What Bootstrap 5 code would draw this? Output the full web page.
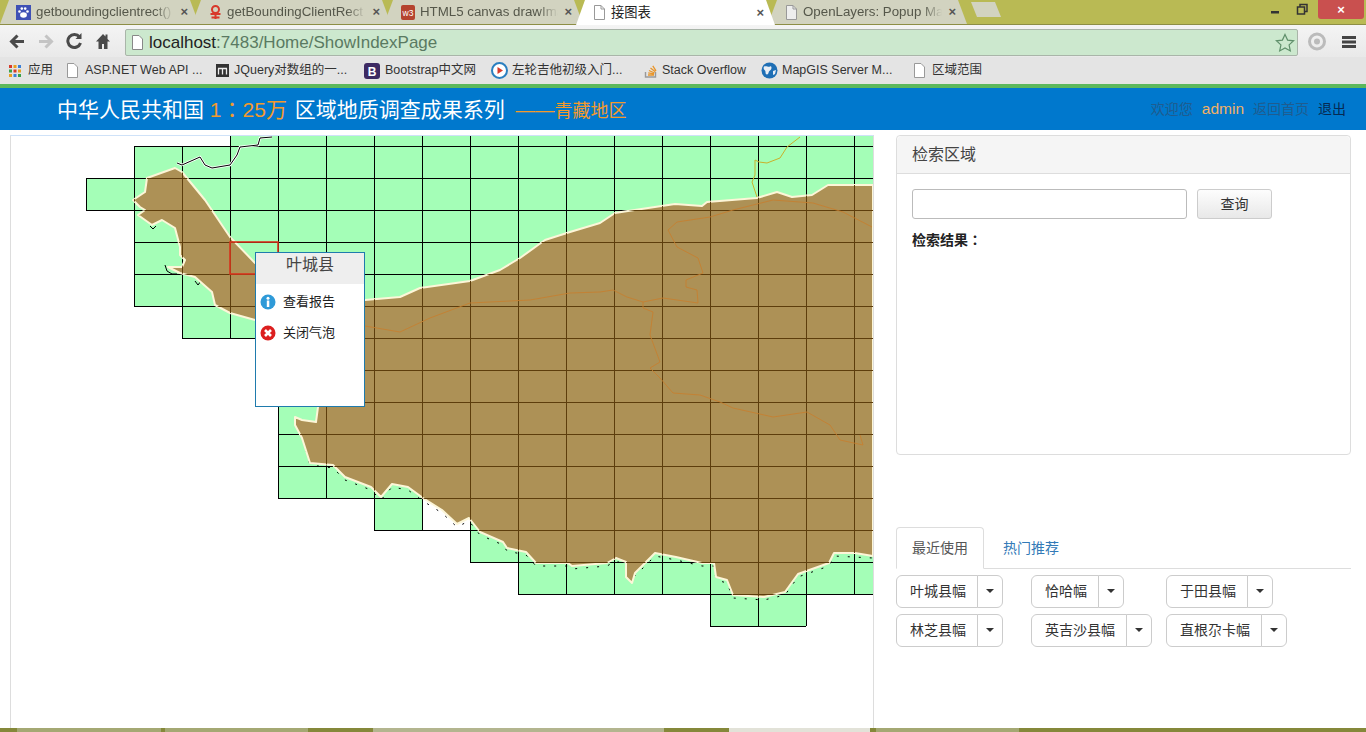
<!DOCTYPE html>
<html lang="zh-CN">
<head>
<meta charset="utf-8">
<title>接图表</title>
<link href="https://cdn.jsdelivr.net/npm/bootstrap@5.3.0/dist/css/bootstrap.min.css" rel="stylesheet">
<style>
html,body{height:732px;overflow:hidden;background:#fff}
body{font-family:"Liberation Sans","Noto Sans CJK SC",sans-serif;font-size:14px;color:#333}
.tabstrip{height:25px;background:#b9ba54;border-bottom:1px solid #8d8e45}
.btab{height:24px;width:199px;margin-right:-7px;padding:0 11px 0 17px;background:#d2d3c0;color:#55574a;font-size:13.3px;clip-path:polygon(0 100%,9px 0,calc(100% - 9px) 0,100% 100%);white-space:nowrap;overflow:hidden;flex:none}
.btab.first{padding-left:16px}
.btab.live{background:#fff;color:#222;height:25px;position:relative;z-index:1}
.btab .ttl{flex:1;min-width:0;margin-left:5px;-webkit-mask-image:linear-gradient(90deg,#000 86%,transparent 100%);mask-image:linear-gradient(90deg,#000 86%,transparent 100%)}
.btab.live .ttl{-webkit-mask-image:none;mask-image:none}
.btab .xx{font-size:13px;color:#555;margin-left:6px;font-weight:700}
.newtab{width:30px;height:15px;margin:2px 0 0 11px;background:#d2d3c0;clip-path:polygon(0 0,calc(100% - 6px) 0,100% 100%,6px 100%);flex:none}
.winctl{width:130px;height:24px;margin-left:auto;margin-right:2px;flex:none}
.winx{width:46px;height:19px;background:#c9504f;color:#fff;font-size:13px;font-weight:700;border-radius:0 0 3px 3px}
.toolbar{height:32px;background:linear-gradient(#f4f4f4,#e9e9e9);padding:4px 0 0 8px}
.tgap{margin-left:11px}
.omni{width:1173px;height:27px;margin-left:14px;background:#cce8ce;border:1px solid #a9b5a9;border-radius:2px;font-size:17px;color:#5a7a62;padding:0 2px 0 5px;line-height:1;flex:none}
.omni b{font-weight:400;color:#222}
.omnidoc{margin-right:5px;flex:none}
.tcircle{margin-left:8px}
.tmenu{margin-left:13px}
.bookbar{height:27px;background:#e4e4e4;font-size:12.5px;color:#333;padding-left:8px;white-space:nowrap}
.bm{flex:none;gap:6px}
.bm1{width:58px}.bm2{width:149px}.bm3{width:149px;gap:4px}.bm4{width:127px;gap:5px}.bm5{width:152px;gap:4px}.bm6{width:118px;gap:3px}.bm7{width:152px;gap:4px}
.greenline{height:4px;background:#5cb85c}
.hero{height:42px;background:#0078cd;padding:0 20px 0 57px}
.herotitle{font-size:21px;color:#fff;white-space:pre}
.herotitle em{font-style:normal;color:#f39a2c;margin-right:2px}
.herotitle .sub{font-size:18px;color:#f39a2c;margin-left:5px}
.herotitle .dash{font-size:19.5px}
.tccolon{font-family:"Noto Sans CJK TC",sans-serif}
.heronav{font-size:14px;gap:9px}
.heronav .a1{color:#1f5c8f}.heronav .a2{color:#f2b166;font-size:15.5px}.heronav .a3{color:#1f5c8f}.heronav .a4{color:#062a52}
.workspace{height:598px;padding:5px 0 0 10px}
.mapbox{width:864px;height:593px;position:relative;flex:none;border-top:1px solid #cfe2f8;border-left:1px solid #ddd;border-right:1px solid #ddd;overflow:hidden}
.mapbox svg{display:block}
.gridlines{shape-rendering:crispEdges}
.bubble{position:absolute;left:244px;top:116px;width:110px;height:155px;background:#fff;border:1px solid #1f7bad}
.bubble-head{height:31px;background:#eee;text-align:center;font-size:16px;line-height:24px;color:#444}
.bubble-row{height:31px;gap:7px;padding-left:4px;font-size:13px;color:#222}
.bubble-row.one{margin-top:2px}
.sidepane{width:455px;margin-left:22px;flex:none}
.searchcard{height:320px;border-color:#ddd;border-radius:4px}
.searchcard .card-header{height:38px;background:#f5f5f5;font-size:16px;padding:7px 15px;color:#444;border-color:#ddd}
.searchcard .card-body{padding:15px}
.searchcard .form-control{width:275px;height:30px;border-color:#bbb;border-radius:3px}
.querybtn{width:75px;height:30px;margin-left:10px;padding:0;font-size:14px;color:#333;background:linear-gradient(#fdfdfd,#e8e8e8);border:1px solid #ccc;border-radius:3px}
.resultlabel{font-size:14px;font-weight:700;margin-top:10px;color:#222}
.recent{margin-top:72px}
.recent .nav-tabs{height:42px;border-color:#ddd}
.recent .nav-link{height:42px;padding:10px 15px;font-size:14px;color:#337ab7;border-radius:4px 4px 0 0}
.recent .nav-link.active{color:#555;border-color:#ddd #ddd #fff;margin-right:3px}
.picks{display:grid;grid-template-columns:repeat(3,135px);justify-items:start;row-gap:6.5px;margin-top:6px}
.pick{font-size:14px;height:32.5px;padding:0 11px 0 13px;line-height:1;color:#333;background:#fff;border:1px solid #ccc}
.pick.dropdown-toggle-split{width:26px;padding:0}
.pick:hover{background:#fff;border-color:#ccc;color:#333}
.taskbar{height:4px;background:#85883a}
.taskbar div{height:4px;flex:none}
.tk1{background:#a4a873}.tk2{background:#b3b58f}.tk3{background:#e2e2d8}
.w17{width:17px}.w144{width:144px}.w4{width:4px}.w143{width:143px}.w65{width:65px}.w146{width:146px}.w145{width:145px}.w141{width:141px}.w6{width:6px}
</style>
</head>
<body>
<div class="tabstrip d-flex align-items-start">
  <div class="btab first d-flex align-items-center"><svg width="15" height="15" viewBox="0 0 15 15"><rect width="15" height="15" fill="#3f51b5"/><g fill="#fff"><ellipse cx="7.500" cy="10" rx="3.400" ry="2.800"/><circle cx="3.500" cy="6.500" r="1.300"/><circle cx="11.500" cy="6.500" r="1.300"/><circle cx="5.800" cy="3.600" r="1.300"/><circle cx="9.200" cy="3.600" r="1.300"/></g></svg><span class="ttl">getboundingclientrect()</span><span class="xx">×</span></div>
  <div class="btab d-flex align-items-center"><svg width="13" height="15" viewBox="0 0 13 15"><g fill="none" stroke="#d8392b" stroke-width="2"><circle cx="6.500" cy="4.500" r="3.500"/><path d="M1.500 9h10M2.500 12.500h8M6.500 8v6"/></g></svg><span class="ttl">getBoundingClientRect</span><span class="xx">×</span></div>
  <div class="btab d-flex align-items-center"><svg width="14" height="15" viewBox="0 0 14 15"><rect width="14" height="15" rx="2" fill="#b5442f"/><text x="7" y="11" text-anchor="middle" font-size="8.500" fill="#fff" font-family="Liberation Sans">w3</text></svg><span class="ttl">HTML5 canvas drawIma</span><span class="xx">×</span></div>
  <div class="btab live d-flex align-items-center"><svg width="13" height="15" viewBox="0 0 13 15"><path d="M1.500.5h6.500l3.500 3.500v10.500h-10z" fill="#fff" stroke="#999"/><path d="M8 .5v3.500h3.500" fill="none" stroke="#999"/></svg><span class="ttl">接图表</span><span class="xx">×</span></div>
  <div class="btab d-flex align-items-center"><svg width="13" height="15" viewBox="0 0 13 15"><path d="M1.500.5h6.500l3.500 3.500v10.500h-10z" fill="#eee" stroke="#999"/><path d="M8 .5v3.500h3.500" fill="none" stroke="#999"/></svg><span class="ttl">OpenLayers: Popup Ma</span><span class="xx">×</span></div>
  <div class="newtab"></div>
  <div class="winctl d-flex justify-content-end align-items-start">
    <svg width="20" height="18" viewBox="0 0 20 18" class="me-1"><rect x="1" y="11" width="8" height="2.500" fill="#333"/></svg>
    <svg width="20" height="18" viewBox="0 0 20 18" class="me-1"><g fill="none" stroke="#333" stroke-width="1.500"><rect x="3.500" y="7" width="7" height="7"/><path d="M6 7V4.500h7v7h-2.500"/></g></svg>
    <div class="winx d-flex align-items-center justify-content-center">×</div>
  </div>
</div>
<div class="toolbar d-flex align-items-start">
  <svg width="18" height="24" viewBox="0 0 18 24"><path d="M16 12.500H4M9.500 6.500l-6 6 6 6" fill="none" stroke="#4a4a4a" stroke-width="3"/></svg>
  <svg width="18" height="24" viewBox="0 0 18 24" class="tgap"><path d="M2 12.500h12M8.500 6.500l6 6-6 6" fill="none" stroke="#c4c4c4" stroke-width="3"/></svg>
  <svg width="18" height="24" viewBox="0 0 18 24" class="tgap"><path d="M14.500 14a6.500 6.500 0 1 1-1-6" fill="none" stroke="#4a4a4a" stroke-width="3"/><path d="M15.500 4v6h-6z" fill="#4a4a4a"/></svg>
  <svg width="16" height="24" viewBox="0 0 16 24" class="tgap"><path d="M8 5L1 12.500h2.500V20h3.500v-5h2v5h3.500v-7.500H15L12.500 10V5.500h-2V7.500z" fill="#4a4a4a"/></svg>
  <div class="omni d-flex align-items-center">
    <svg width="13" height="15" viewBox="0 0 13 15" class="omnidoc"><path d="M1.500.5h6.500l3.500 3.500v10.500h-10z" fill="#fff" stroke="#888"/></svg>
    <span><b>localhost</b>:7483/Home/ShowIndexPage</span>
    <svg width="20" height="20" viewBox="0 0 20 20" class="ms-auto"><path d="M10 1.500l2.600 5.600 6 .7-4.500 4.100 1.200 6-5.300-3-5.300 3 1.200-6L1.400 7.800l6-.7z" fill="none" stroke="#5f8f6a" stroke-width="1.200"/></svg>
  </div>
  <svg width="22" height="24" viewBox="0 0 22 24" class="tcircle"><circle cx="11" cy="12.500" r="7.500" fill="none" stroke="#bbb" stroke-width="3"/><circle cx="11" cy="12.500" r="3" fill="#bbb"/></svg>
  <svg width="16" height="24" viewBox="0 0 16 24" class="tmenu"><path d="M1 7h14v3H1zM1 11.500h14v3H1zM1 16h14v3H1z" fill="#444"/></svg>
</div>
<div class="bookbar d-flex align-items-center">
  <div class="bm bm1 d-flex align-items-center"><svg width="14" height="14" viewBox="0 0 14 14"><g><rect x="1" y="1" width="3" height="3" fill="#d8392b"/><rect x="5.500" y="1" width="3" height="3" fill="#e8a020"/><rect x="10" y="1" width="3" height="3" fill="#3a7fd8"/><rect x="1" y="5.500" width="3" height="3" fill="#3aa04a"/><rect x="5.500" y="5.500" width="3" height="3" fill="#d8392b"/><rect x="10" y="5.500" width="3" height="3" fill="#e8a020"/><rect x="1" y="10" width="3" height="3" fill="#e8a020"/><rect x="5.500" y="10" width="3" height="3" fill="#3a7fd8"/><rect x="10" y="10" width="3" height="3" fill="#3aa04a"/></g></svg><span>应用</span></div>
  <div class="bm bm2 d-flex align-items-center"><svg width="13" height="15" viewBox="0 0 13 15"><path d="M1.500.5h6.500l3.500 3.500v10.500h-10z" fill="#fff" stroke="#999"/></svg><span>ASP.NET Web API ...</span></div>
  <div class="bm bm3 d-flex align-items-center"><svg width="15" height="15" viewBox="0 0 15 15"><rect x="1" y="1" width="13" height="13" fill="#333"/><path d="M3.500 11.500v-6M7.500 11.500v-6M11.500 11.500v-6M3 5.500h9" stroke="#eee" stroke-width="1.300" fill="none"/></svg><span>JQuery对数组的一...</span></div>
  <div class="bm bm4 d-flex align-items-center"><svg width="16" height="16" viewBox="0 0 16 16"><rect width="16" height="16" rx="3" fill="#3d2a63"/><text x="8" y="12.500" text-anchor="middle" font-size="12" font-weight="700" fill="#fff" font-family="Liberation Sans">B</text></svg><span>Bootstrap中文网</span></div>
  <div class="bm bm5 d-flex align-items-center"><svg width="17" height="17" viewBox="0 0 17 17"><circle cx="8.500" cy="8.500" r="7.500" fill="#fff" stroke="#2a7fc0" stroke-width="2"/><path d="M6.500 5l5.500 3.500L6.500 12z" fill="#d8392b"/></svg><span>左轮吉他初级入门...</span></div>
  <div class="bm bm6 d-flex align-items-center"><svg width="16" height="17" viewBox="0 0 16 17"><path d="M2.500 10v5h10v-5" fill="none" stroke="#999" stroke-width="1.400"/><path d="M5 13h6M5.200 10.800l5.800 1M6 8.500l5.500 2.500M7.500 6l4.800 3.800M9.800 3.800l3.200 5" fill="none" stroke="#e8952a" stroke-width="1.300"/></svg><span>Stack Overflow</span></div>
  <div class="bm bm7 d-flex align-items-center"><svg width="17" height="17" viewBox="0 0 17 17"><circle cx="8.500" cy="8.500" r="8" fill="#1f6fb5"/><path d="M3 4.500c3-1 4 1 6 0s2 3 0 4-1 4-3 4-1-3-2-4-2-2-1-4zM12 9l3-1-1 4-2 1z" fill="#e8eef5"/></svg><span>MapGIS Server M...</span></div>
  <div class="bm d-flex align-items-center"><svg width="13" height="15" viewBox="0 0 13 15"><path d="M1.500.5h6.500l3.500 3.500v10.500h-10z" fill="#fff" stroke="#999"/></svg><span>区域范围</span></div>
</div>
<div class="greenline"></div>
<header class="hero d-flex align-items-center justify-content-between">
  <div class="herotitle">中华人民共和国 <em>1<span class="tccolon" lang="zh-TW">：</span>25万</em> 区域地质调查成果系列 <span class="sub"><span class="dash">——</span>青藏地区</span></div>
  <div class="heronav d-flex align-items-center"><span class="a1">欢迎您</span><span class="a2">admin</span><span class="a3">返回首页</span><span class="a4">退出</span></div>
</header>
<main class="workspace d-flex">
  <section class="mapbox">
    <svg width="862" height="592" viewBox="11 136 862 592">
      <defs>
        <clipPath id="landclip"><polygon id="landshape" stroke-linejoin="round" points="175,168 182,172 205,200 230,237 255,263 300,300 340,304 365,300 400,297 420,288 470,281 500,270 520,258 545,240 570,232 600,223 615,213 628,211 675,204 702,206 707,202 757,198 777,192 792,197 812,195 828,185 873,185 873,556 855,553 834,553 829,563 798,574 785,592 764,597 733,595 727,580 716,577 714,563 702,563 676,557 655,553 635,573 632,583 626,577 626,562 616,558 607,563 572,566 568,563 549,563 536,563 526,552 507,548 503,542 480,532 469,518 457,524 442,510 423,498 408,487 392,484 381,497 371,487 345,477 333,465 310,463 302,438 295,425 295,417 302,420 316,422 318,407 300,350 255,320 230,313 215,305 212,292 195,277 180,273 168,267 182,267 185,260 180,255 180,247 175,228 162,220 152,225 138,215 145,210 140,207 133,200 145,192 147,178"/></clipPath>
      </defs>
      <path fill="#a4feb7" d="M230 136h644v458h-20v0h-48v32h-96v-32h-192v-32h-48v-32h-96v-32h-96V338h-96v-32h-48V210H86v-32h48v-32h96z"/>
      <rect x="422" y="498" width="48" height="32" fill="#fff"/>
      <path class="gridlines" fill="none" stroke="#000" stroke-width="1" d="M134 146H874M86 178H874M86 210H874M134 242H874M134 274H874M134 306H874M182 338H874M278 370H874M278 402H874M278 434H874M278 466H874M278 498H874M374 530H874M470 562H874M518 594H874M710 626H806M86 178V210M134 146V306M182 146V338M230 136V338M278 136V498M326 136V498M374 136V530M422 136V530M470 136V562M518 136V594M566 136V594M614 136V594M662 136V594M710 136V626M758 136V626M806 136V626M854 136V594"/>
      <path fill="none" stroke="#fff" stroke-width="2.500" d="M272 137L260 138 258 145 240 147 237 155 230 165 212 168 205 165 200 157 182 165 177 163"/>
      <path fill="none" stroke="#000" stroke-width="1" d="M272 137L260 138 258 145 240 147 237 155 230 165 212 168 205 165 200 157 182 165 177 163"/>
      <polyline fill="none" stroke="#000" stroke-width="1" stroke-dasharray="2 9" points="303,440 310,465 333,468 345,480 371,490 381,500 392,487 408,490 423,501 442,513 457,527 469,521 480,535 503,545 507,551 526,555 536,566 549,566 568,566 572,569 607,566 616,561 626,565 635,576 655,556 676,560 702,566 714,566 716,580 727,583 733,598 764,600 785,595 798,577 829,566 834,556 873,558"/>
      <polyline fill="none" stroke="#000" stroke-width="1" points="165,265 167,271 172,274 177,274"/>
      <polyline fill="none" stroke="#000" stroke-width="1" points="195,281 198,285 201,281"/>
      <polyline fill="none" stroke="#000" stroke-width="1" points="150,226 153,229 156,226"/>
      <use href="#landshape" fill="#ad9156" stroke="#fdf6d8" stroke-width="2" stroke-linejoin="round"/>
      <g clip-path="url(#landclip)"><path class="gridlines" fill="none" stroke="#5d3d0c" stroke-width="1" d="M134 146H874M86 178H874M86 210H874M134 242H874M134 274H874M134 306H874M182 338H874M278 370H874M278 402H874M278 434H874M278 466H874M278 498H874M374 530H874M470 562H874M518 594H874M710 626H806M134 146V306M182 146V338M230 136V338M278 136V498M326 136V498M374 136V530M422 136V530M470 136V562M518 136V594M566 136V594M614 136V594M662 136V594M710 136V626M758 136V626M806 136V626M854 136V594"/>
      <g fill="none" stroke="#c77f2f" stroke-width="1" stroke-opacity=".85">
        <polyline points="365,326 400,332 430,318 470,303 530,300 570,293 600,292 613,290 627,297 643,302 663,298 698,303 697,290 686,287 686,280 703,273 698,258 677,247 668,230 677,222 710,217 733,210 773,200 813,203 843,212 872,227"/>
        <polyline points="643,302 643,308 653,312 650,335 660,362 650,368 660,378 673,393 700,395 720,402 733,408 773,417 807,412 830,425 840,440 863,445 860,435"/>
      </g></g>
      <polyline fill="none" stroke="#c9b12a" stroke-width="1" points="800,137 787,147 780,158 767,163 759,162 755,160 755,175 752,182 757,197"/>
      <rect x="230" y="242" width="48" height="32" fill="none" stroke="#d8341c" stroke-width="1.600"/>
    </svg>
    <div class="bubble">
      <div class="bubble-head">叶城县</div>
      <div class="bubble-row one d-flex align-items-center"><svg width="16" height="16" viewBox="0 0 16 16"><circle cx="8" cy="8" r="7.500" fill="#2e9ad8"/><rect x="6.800" y="6.500" width="2.500" height="6.500" fill="#fff"/><circle cx="8" cy="4.200" r="1.500" fill="#fff"/></svg><span>查看报告</span></div>
      <div class="bubble-row d-flex align-items-center"><svg width="16" height="16" viewBox="0 0 16 16"><circle cx="8" cy="8" r="7.500" fill="#dc1f1f"/><path d="M5 5l6 6M11 5l-6 6" stroke="#fff" stroke-width="2.600"/></svg><span>关闭气泡</span></div>
    </div>
  </section>
  <aside class="sidepane">
    <div class="card searchcard">
      <div class="card-header">检索区域</div>
      <div class="card-body">
        <form class="d-flex"><input class="form-control" type="text" aria-label="检索区域"><button class="btn querybtn" type="button">查询</button></form>
        <div class="resultlabel">检索结果<span class="tccolon" lang="zh-TW">：</span></div>
      </div>
    </div>
    <div class="recent">
      <ul class="nav nav-tabs">
        <li class="nav-item"><a class="nav-link active" href="#">最近使用</a></li>
        <li class="nav-item"><a class="nav-link" href="#">热门推荐</a></li>
      </ul>
      <div class="picks">
        <div class="btn-group"><button class="btn pick" type="button">叶城县幅</button><button class="btn pick dropdown-toggle dropdown-toggle-split" type="button" aria-label="展开"></button></div>
        <div class="btn-group"><button class="btn pick" type="button">恰哈幅</button><button class="btn pick dropdown-toggle dropdown-toggle-split" type="button" aria-label="展开"></button></div>
        <div class="btn-group"><button class="btn pick" type="button">于田县幅</button><button class="btn pick dropdown-toggle dropdown-toggle-split" type="button" aria-label="展开"></button></div>
        <div class="btn-group"><button class="btn pick" type="button">林芝县幅</button><button class="btn pick dropdown-toggle dropdown-toggle-split" type="button" aria-label="展开"></button></div>
        <div class="btn-group"><button class="btn pick" type="button">英吉沙县幅</button><button class="btn pick dropdown-toggle dropdown-toggle-split" type="button" aria-label="展开"></button></div>
        <div class="btn-group"><button class="btn pick" type="button">直根尕卡幅</button><button class="btn pick dropdown-toggle dropdown-toggle-split" type="button" aria-label="展开"></button></div>
      </div>
    </div>
  </aside>
</main>
<footer class="taskbar d-flex">
  <div class="w17"></div><div class="tk1 w144"></div><div class="w4"></div><div class="tk1 w143"></div><div class="w65"></div><div class="tk2 w146"></div><div class="tk2 w145"></div><div class="w65"></div><div class="tk3 w141"></div><div class="w6"></div><div class="tk1 w143"></div>
</footer>
<script src="https://cdn.jsdelivr.net/npm/bootstrap@5.3.0/dist/js/bootstrap.bundle.min.js"></script>
</body>
</html>
